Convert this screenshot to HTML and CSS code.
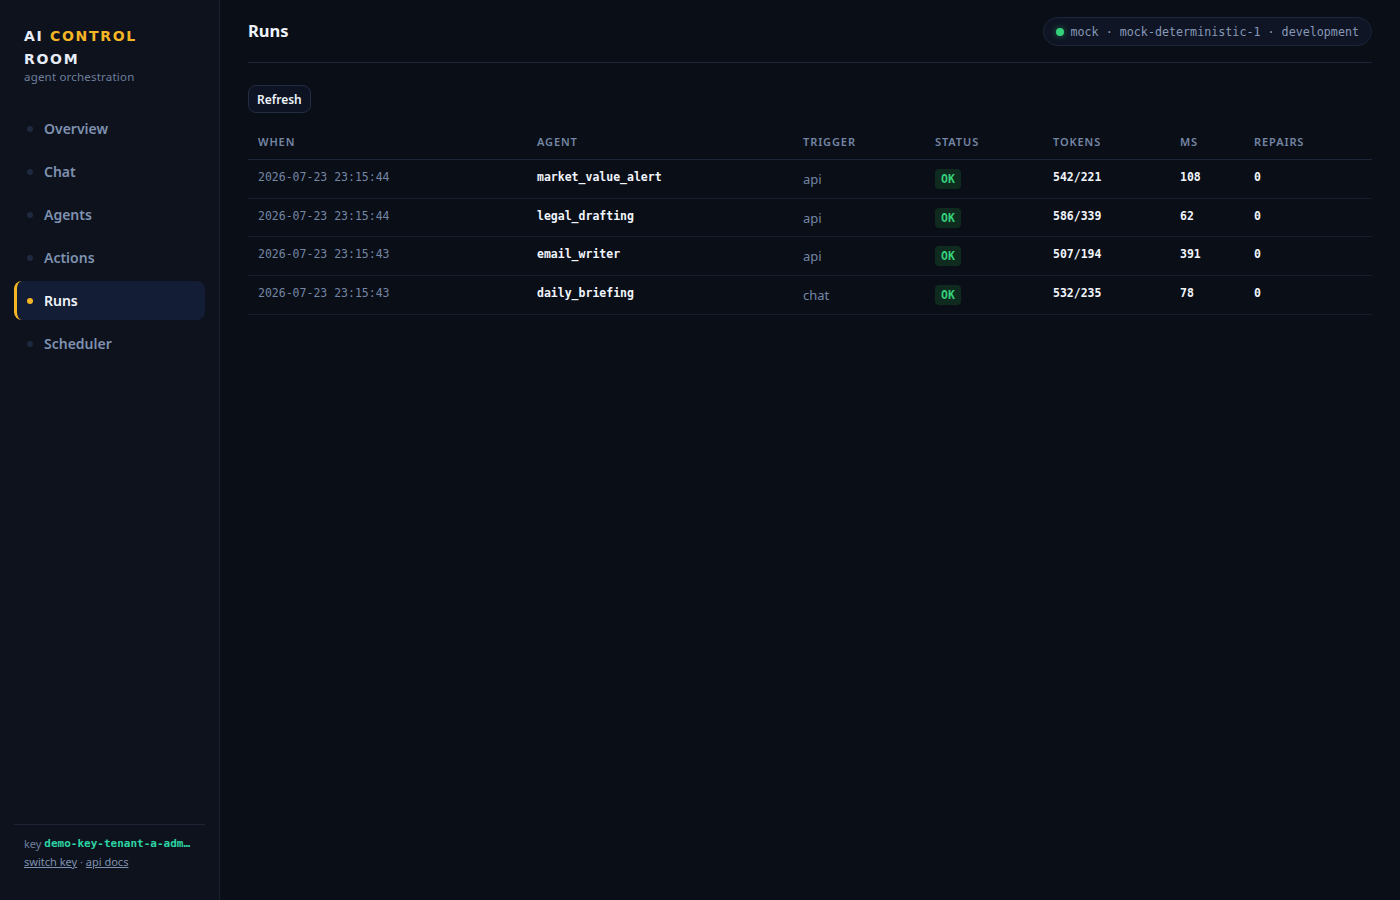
FILE: index.html
```html
<!DOCTYPE html>
<html lang="en">
<head>
    <meta charset="UTF-8">
    <meta name="viewport" content="width=device-width, initial-scale=1.0">
    <title>AI Control Room - Runs</title>
    <link rel="stylesheet" href="styles.css">
</head>
<body>

<div class="app">
    <aside class="sidebar">
        <div class="brand">
            <div class="brand-title">AI <span class="accent">CONTROL</span> ROOM</div>
            <div class="brand-sub">agent orchestration</div>
        </div>

        <nav class="nav">
            <a class="nav-item"><span class="dot"></span>Overview</a>
            <a class="nav-item"><span class="dot"></span>Chat</a>
            <a class="nav-item"><span class="dot"></span>Agents</a>
            <a class="nav-item"><span class="dot"></span>Actions</a>
            <a class="nav-item active"><span class="dot"></span>Runs</a>
            <a class="nav-item"><span class="dot"></span>Scheduler</a>
        </nav>

        <div class="side-foot">
            <div class="key-line">key <code class="key">demo-key-tenant-a-admin</code></div>
            <div class="links"><a href="#">switch key</a> · <a href="#">api docs</a></div>
        </div>
    </aside>

    <main class="main">
        <header class="topbar">
            <h1>Runs</h1>
            <div class="env-pill"><span class="live"></span>mock · mock-deterministic-1 · development</div>
        </header>

        <div class="toolbar">
            <button class="btn">Refresh</button>
        </div>

        <table class="runs">
            <thead>
                <tr>
                    <th class="c-when">When</th>
                    <th class="c-agent">Agent</th>
                    <th class="c-trigger">Trigger</th>
                    <th class="c-status">Status</th>
                    <th class="c-tokens">Tokens</th>
                    <th class="c-ms">ms</th>
                    <th>Repairs</th>
                </tr>
            </thead>
            <tbody>
                <tr>
                    <td class="mono muted">2026-07-23 23:15:44</td>
                    <td class="mono strong">market_value_alert</td>
                    <td class="trig">api</td>
                    <td><span class="badge">OK</span></td>
                    <td class="mono strong">542/221</td>
                    <td class="mono strong">108</td>
                    <td class="mono strong">0</td>
                </tr>
                <tr>
                    <td class="mono muted">2026-07-23 23:15:44</td>
                    <td class="mono strong">legal_drafting</td>
                    <td class="trig">api</td>
                    <td><span class="badge">OK</span></td>
                    <td class="mono strong">586/339</td>
                    <td class="mono strong">62</td>
                    <td class="mono strong">0</td>
                </tr>
                <tr>
                    <td class="mono muted">2026-07-23 23:15:43</td>
                    <td class="mono strong">email_writer</td>
                    <td class="trig">api</td>
                    <td><span class="badge">OK</span></td>
                    <td class="mono strong">507/194</td>
                    <td class="mono strong">391</td>
                    <td class="mono strong">0</td>
                </tr>
                <tr>
                    <td class="mono muted">2026-07-23 23:15:43</td>
                    <td class="mono strong">daily_briefing</td>
                    <td class="trig">chat</td>
                    <td><span class="badge">OK</span></td>
                    <td class="mono strong">532/235</td>
                    <td class="mono strong">78</td>
                    <td class="mono strong">0</td>
                </tr>
            </tbody>
        </table>
    </main>
</div>

</body>
</html>
```

FILE: styles.css
```css
* { margin: 0; padding: 0; box-sizing: border-box; }
html, body { height: 100%; }
body { background: #0a0e17; color: #dbe4f3; font-family: "Noto Sans", "Open Sans", sans-serif; font-size: 14px; overflow: hidden; }

.app { display: flex; height: 100vh; }

/* sidebar */
.sidebar {
    width: 220px;
    flex: none;
    background: #0d121d;
    border-right: 1px solid #1a2232;
    display: flex;
    flex-direction: column;
    padding: 25px 14px 29px 14px;
}

.brand { padding: 0 10px; }
.brand-title {
    font-family: "DejaVu Sans", sans-serif;
    font-weight: bold;
    font-size: 14px;
    letter-spacing: 1.7px;
    line-height: 23px;
    color: #e6edf8;
    width: 130px;
}
.brand-title .accent { color: #f5b625; }
.brand-sub { font-size: 11.5px; color: #6e7f9c; margin-top: -2px; letter-spacing: 0.2px; }

.nav { display: flex; flex-direction: column; gap: 4px; margin-top: 25px; }
.nav-item {
    display: flex;
    align-items: center;
    gap: 11px;
    height: 39px;
    padding-left: 10px;
    border-radius: 8px;
    color: #7f91b0;
    font-weight: 600;
    font-size: 14px;
    border-left: 3px solid transparent;
}
.nav-item .dot { width: 6px; height: 6px; border-radius: 50%; background: #1e2940; }
.nav-item.active { background: #131d35; border-left-color: #f5b625; color: #f1f5fc; }
.nav-item.active .dot { background: #f5b625; }

.side-foot { margin-top: auto; border-top: 1px solid #1c2435; padding: 10px 10px 0 10px; font-size: 11px; color: #6e7f9c; line-height: 18px; }
.key-line { white-space: nowrap; }
.key {
    display: inline-block;
    vertical-align: bottom;
    max-width: 149px;
    overflow: hidden;
    text-overflow: ellipsis;
    font-family: "DejaVu Sans Mono", monospace;
    font-size: 11px;
    color: #2dd4a3;
    font-weight: bold;
}
.links a { color: #7f91b0; text-decoration: underline; }

/* main */
.main { flex: 1; padding: 0 28px; min-width: 0; }

.topbar {
    display: flex;
    align-items: center;
    justify-content: space-between;
    height: 63px;
    border-bottom: 1px solid #1c2539;
    padding-bottom: 2px;
}
.topbar h1 { font-size: 16.5px; font-weight: bold; color: #eef3fb; }

.env-pill {
    display: flex;
    align-items: center;
    gap: 7px;
    height: 29px;
    margin-top: 3px;
    padding: 0 12px 0 12px;
    border: 1px solid #1c2539;
    border-radius: 15px;
    background: #0f1524;
    font-family: "DejaVu Sans Mono", monospace;
    font-size: 11.7px;
    color: #8799b8;
}
.env-pill .live { width: 8px; height: 8px; border-radius: 50%; background: #35d07a; box-shadow: 0 0 6px rgba(53, 208, 122, 0.5); }

.toolbar { padding-top: 22px; }
.btn {
    height: 28px;
    padding: 0 8px;
    background: #0d1322;
    color: #eef3fb;
    border: 1px solid #222c42;
    border-radius: 8px;
    font-family: "Noto Sans", sans-serif;
    font-weight: 600;
    font-size: 12px;
    cursor: pointer;
}

/* table */
.runs { width: 100%; border-collapse: collapse; margin-top: 21px; table-layout: fixed; }
.runs th {
    text-align: left;
    font-size: 11px;
    font-weight: 600;
    letter-spacing: 0.9px;
    text-transform: uppercase;
    color: #7486a4;
    padding: 0 10px 10px 10px;
    border-bottom: 1px solid #1c2539;
}
.runs td { padding: 0 10px; height: 38.7px; border-bottom: 1px solid #161e2e; font-size: 13px; vertical-align: middle; }
.c-when { width: 279px; }
.c-agent { width: 266px; }
.c-trigger { width: 132px; }
.c-status { width: 118px; }
.c-tokens { width: 127px; }
.c-ms { width: 74px; }

.runs td.mono { font-family: "DejaVu Sans Mono", monospace; font-size: 11.5px; padding-bottom: 4px; }
.muted { color: #7486a4; }
.strong { color: #f1f5fc; font-weight: bold; }
.trig { color: #7486a4; }

.badge {
    display: inline-block;
    font-family: "DejaVu Sans Mono", monospace;
    font-weight: bold;
    font-size: 11.5px;
    color: #35d07a;
    background: #0f2a1e;
    border-radius: 4px;
    padding: 2px 6px;
    line-height: 16px;
}
```
